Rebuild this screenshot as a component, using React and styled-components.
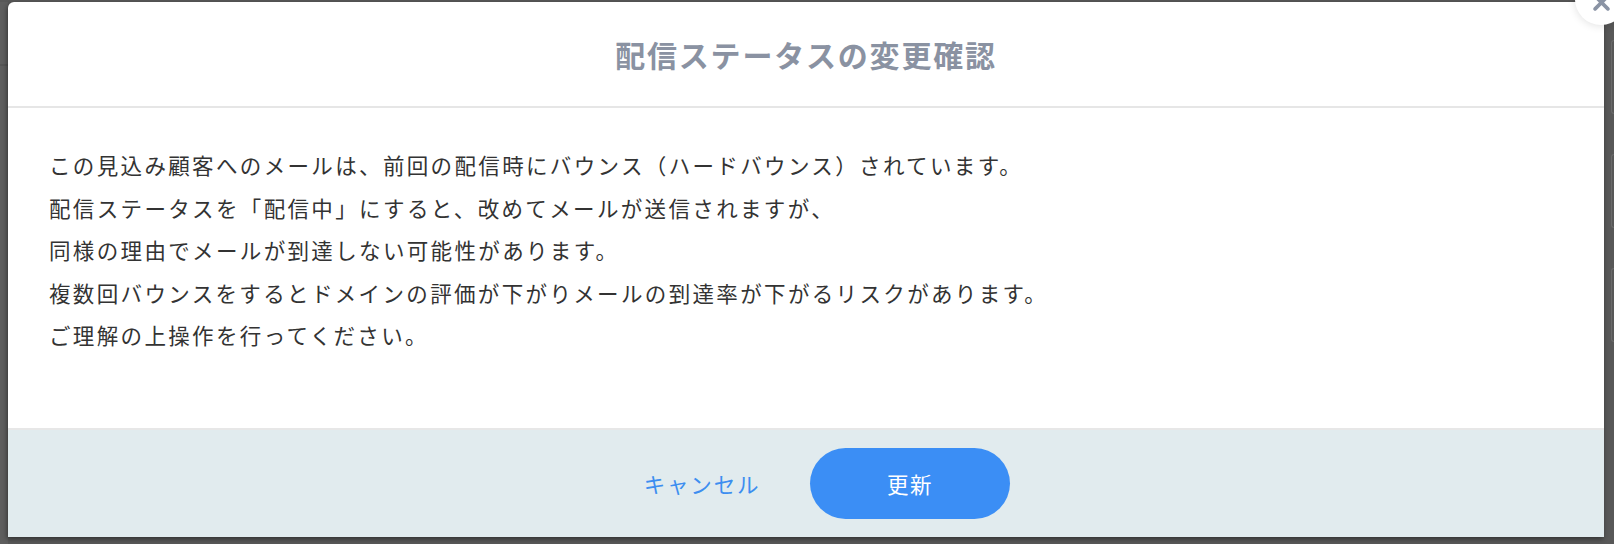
import React from 'react'
import styled, { createGlobalStyle } from 'styled-components';

const GlobalStyle = createGlobalStyle`
  html, body {
    margin: 0;
    padding: 0;
    background: #585858;
    overflow: hidden;
  }
  body {
    font-family: "Noto Sans CJK JP", "Noto Sans", sans-serif;
  }
`;

function App() {
  return (
    <Page>
      <GlobalStyle />
      <Gutter />
      <Modal>
        <CloseButton aria-label="close">
          <svg width="17" height="17" viewBox="0 0 16 16">
            <path d="M2 2 L14 14 M14 2 L2 14" stroke="#8a93a4" strokeWidth="3.4" strokeLinecap="round" />
          </svg>
        </CloseButton>
        <Header>
          <Title>配信ステータスの変更確認</Title>
        </Header>
        <Body>
          <p>この見込み顧客へのメールは、前回の配信時にバウンス（ハードバウンス）されています。</p>
          <p>配信ステータスを「配信中」にすると、改めてメールが送信されますが、</p>
          <p>同様の理由でメールが到達しない可能性があります。</p>
          <p>複数回バウンスをするとドメインの評価が下がりメールの到達率が下がるリスクがあります。</p>
          <p>ご理解の上操作を行ってください。</p>
        </Body>
        <Footer>
          <Cancel>キャンセル</Cancel>
          <Submit>更新</Submit>
        </Footer>
      </Modal>
      <Side>
        <Ghost />
        <Ghost />
        <Ghost />
      </Side>
    </Page>
  )
}

export default App;

const Page = styled.div`
  display: flex;
  width: 1614px;
  height: 544px;
  padding-top: 2px;
  box-sizing: border-box;
  background: #585858;
`;
const Gutter = styled.div`
  width: 8px;
  flex: none;
  background: linear-gradient(to bottom, #5e5e5e 0, #5e5e5e 62px, #555 62px, #555 64px, #5e5e5e 64px);
`;
const Modal = styled.div`
  position: relative;
  width: 1596px;
  height: 535px;
  flex: none;
  display: flex;
  flex-direction: column;
  background: #fff;
  border-radius: 6px 6px 0 0;
  box-shadow: -1px 2px 5px rgba(0, 0, 0, 0.45);
`;
const CloseButton = styled.button`
  position: absolute;
  top: -29px;
  right: -23px;
  width: 52px;
  height: 52px;
  border-radius: 50%;
  border: 0;
  background: #fff;
  box-shadow: 0 1px 8px rgba(0, 0, 0, 0.12);
  display: flex;
  align-items: flex-end;
  justify-content: center;
  padding: 0 0 14px 0;
  box-sizing: border-box;
  z-index: 2;
`;
const Header = styled.div`
  height: 104px;
  display: flex;
  align-items: center;
  justify-content: center;
  border-bottom: 2px solid #e6e6e6;
  flex: none;
`;
const Title = styled.h2`
  margin: 0;
  font-size: 30px;
  font-weight: 700;
  letter-spacing: 1.8px;
  color: #8a92a2;
`;
const Body = styled.div`
  flex: 1;
  padding: 36px 40px 0 41px;
  color: #333;
  font-size: 21.5px;
  line-height: 42.5px;
  letter-spacing: 2.35px;
  p {
    margin: 0;
    white-space: nowrap;
  }
`;
const Footer = styled.div`
  height: 107px;
  flex: none;
  display: flex;
  align-items: center;
  justify-content: center;
  gap: 8px;
  background: #e1ebee;
  border-top: 2px solid #e7e7e7;
`;
const Cancel = styled.button`
  width: 200px;
  height: 71px;
  border: 0;
  background: transparent;
  color: #3d8ef0;
  font-family: inherit;
  font-size: 21.5px;
  letter-spacing: 1.8px;
  cursor: pointer;
`;
const Submit = styled.button`
  width: 200px;
  height: 71px;
  border: 0;
  border-radius: 36px;
  background: #3b8ef5;
  color: #fff;
  font-family: inherit;
  font-size: 21.5px;
  letter-spacing: 1.6px;
  cursor: pointer;
`;
const Side = styled.div`
  flex: 1;
  display: flex;
  flex-direction: column;
  gap: 40px;
  padding: 38px 0 0 7px;
`;
const Ghost = styled.div`
  height: 72px;
  border: 1px solid #6a6a6a;
  border-right: 0;
  border-radius: 8px 0 0 8px;
`;
